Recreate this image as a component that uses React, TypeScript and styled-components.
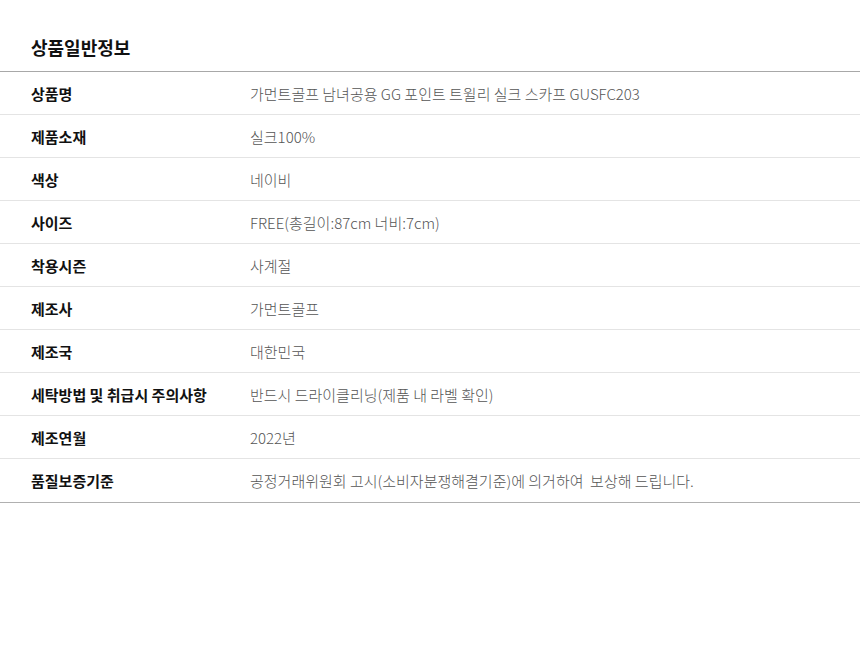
import styled, {createGlobalStyle} from "styled-components";

interface InfoRow {
    label: string;
    value: string;
}

const rows: InfoRow[] = [
    {label: "상품명", value: "가먼트골프 남녀공용 GG 포인트 트윌리 실크 스카프 GUSFC203"},
    {label: "제품소재", value: "실크100%"},
    {label: "색상", value: "네이비"},
    {label: "사이즈", value: "FREE(총길이:87cm 너비:7cm)"},
    {label: "착용시즌", value: "사계절"},
    {label: "제조사", value: "가먼트골프"},
    {label: "제조국", value: "대한민국"},
    {label: "세탁방법 및 취급시 주의사항", value: "반드시 드라이클리닝(제품 내 라벨 확인)"},
    {label: "제조연월", value: "2022년"},
    {label: "품질보증기준", value: "공정거래위원회 고시(소비자분쟁해결기준)에 의거하여  보상해 드립니다."},
];

const GlobalStyle = createGlobalStyle`
body {
  margin: 0;
  background: #fff;
  font-family: "Noto Sans CJK KR", "Noto Sans", sans-serif;
}
`

const Section = styled.section`
width: 860px;
`

const Title = styled.h2`
margin: 0;
height: 72px;
box-sizing: border-box;
padding: 34px 0 0 31px;
font-size: 18px;
line-height: 26px;
font-weight: 700;
color: #111;
border-bottom: 1px solid #a8a8a8;
`

const Table = styled.div`
display: flex;
flex-direction: column;
border-bottom: 1px solid #b0b0b0;
`

const Row = styled.div<{ $last?: boolean }>`
display: grid;
grid-template-columns: 250px 1fr;
height: 43px;
box-sizing: border-box;
align-items: center;
border-bottom: ${p => p.$last ? "none" : "1px solid #e4e4e4"};
`

const Label = styled.div`
padding-left: 31px;
font-size: 15px;
font-weight: 700;
color: #111;
`

const Value = styled.div`
font-size: 15px;
font-weight: 300;
color: #555;
white-space: pre;
`

const App = () => {
    return (
        <>
            <GlobalStyle/>
            <Section>
                <Title>상품일반정보</Title>
                <Table>
                    {rows.map((row, i) => (
                        <Row key={row.label} $last={i === rows.length - 1}>
                            <Label>{row.label}</Label>
                            <Value>{row.value}</Value>
                        </Row>
                    ))}
                </Table>
            </Section>
        </>
    );
};

export default App
